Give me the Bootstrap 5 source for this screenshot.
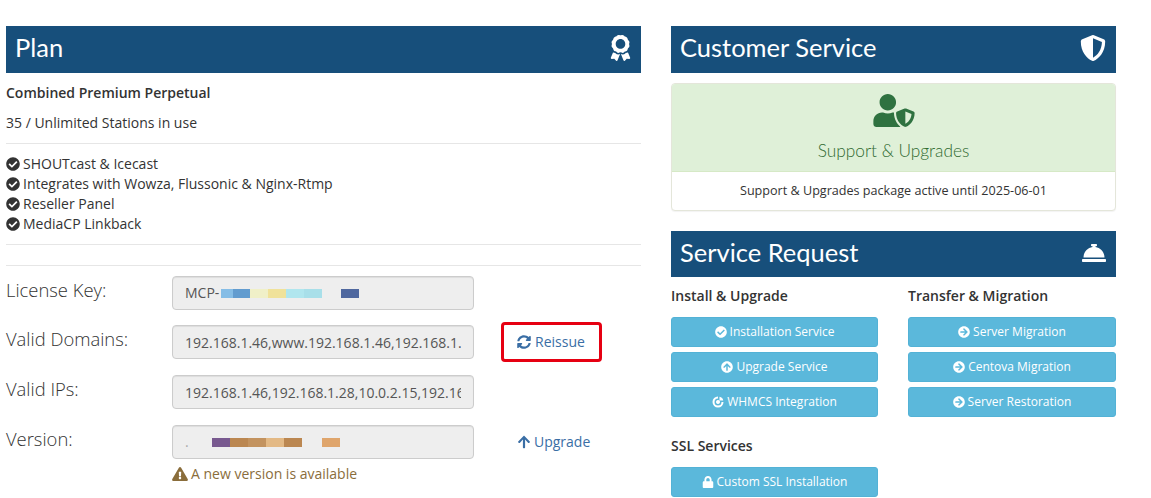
<!DOCTYPE html>
<html lang="en"><head><meta charset="utf-8"><title>License</title>
<link href="https://cdn.jsdelivr.net/npm/bootstrap@5.3.0/dist/css/bootstrap.min.css" rel="stylesheet">
<style>
html,body{height:498px;overflow:hidden}
body{font-family:"Open Sans","Liberation Sans",sans-serif;font-size:14px;line-height:20px;color:#333;background:#fff}
.page-wrap{padding:26px 0 0 6px;gap:30px}
.col-plan{width:635px;flex:none}
.col-side{width:445px;flex:none}
.sec-bar{background:#174f7b;color:#fff;height:47px;padding:0 10px 0 9px;font-family:Lato,"Open Sans",sans-serif;font-size:25.5px;font-weight:400}
.sec-bar.short{height:46px}
.sec-bar span{margin-top:-5px}
.sec-bar svg{fill:#fff;margin-top:-3px}
.plan-name{font-weight:600;margin-top:10px;height:20px}
.plan-use{margin-top:10px;height:20px}
.sep{margin:10px 0;border:0;border-top:1px solid #e6e6e6;opacity:1}
.feat{height:20px}
.feat svg{width:14px;height:14px;fill:#333;margin-right:3px;vertical-align:-2px}
.frow{height:50px;align-items:flex-start}
.frow.first{height:49px}
.flabel{width:166px;flex:none;font-family:"Open Sans",sans-serif;font-weight:300;font-size:18.4px;line-height:28px;color:#333}
.fbox{width:302px;flex:none;height:34px;background:#eee;border:1px solid #ccc;border-radius:4px;padding:6px 12px;color:#555;font-size:14px;line-height:20px;box-shadow:inset 0 1px 1px rgba(0,0,0,.075)}
.fbox.form-control:disabled,.fbox.form-control[readonly]{background:#eee}
.swatch{height:9px;width:18px;flex:none}
.s-lb{background:#85bde6;width:12px;margin-left:2px}.s-b{background:#629ccf;width:17px}.s-py{background:#f0f0c8}.s-y{background:#f0e29a}.s-c{background:#b0e6ee}.s-cc{background:#a8dfe9}.s-n{background:#4f689f}
.s-none{background:transparent;width:19px}
.s-p{background:#78598f;margin-left:23px}.s-br{background:#bb8751}.s-br2{background:#c3935f}.s-t{background:#e3b985}.s-o{background:#dfa56c;margin-left:1px}
.faint-dot{color:#aaa}
.act{margin-left:26px;height:40px;margin-top:-3px;padding:0 14px;color:#3a6ea5;text-decoration:none;display:flex;align-items:center;gap:3px;border:3px solid transparent;border-radius:4px}
.act svg{width:14px;height:14px;fill:#3a6ea5}
.act.mark-red{border-color:#e60012;width:101px;padding:0 13px;margin-left:27px;gap:4px}
.warn-note{color:#8a6d3b;margin-top:-11px;padding-left:166px}
.warn-note svg{width:16px;height:14px;fill:#8a6d3b;vertical-align:-2px;margin-right:3px}
.svc-card{margin-top:10px;height:128px;border:1px solid #e4e6da;border-radius:4px;overflow:hidden;box-shadow:0 1px 1px rgba(0,0,0,.05)}
.svc-top{background:#dff0d8;height:88px;color:#2f6a30;padding-top:10px;border-bottom:1px solid #d6e9c6}
.svc-top svg{width:42px;height:33px;fill:#2f7240;display:block;margin:0 auto}
.svc-title{font-family:Lato,"Open Sans",sans-serif;font-size:17.3px;font-weight:300;margin-top:14px;line-height:20px}
.svc-foot{font-size:12.6px;line-height:37px;color:#333}
.req-h{font-weight:600;font-size:14px;margin:0;height:20px;color:#333}
.req-h.top{margin-top:3px}
.req-h.later{margin-top:21px}
.req-btn{display:flex;align-items:center;justify-content:center;gap:3px;height:30px;padding:0;margin-top:5px;background:#5bb8db;border:1px solid #53b2d6;border-radius:3px;color:#fff;font-size:12px}
.req-h + .req-btn{margin-top:9px}
.req-btn:hover{background:#5bb8db;color:#fff}
.req-btn svg{width:12px;height:12px;fill:#fff}
.req-col{width:207px;flex:none}
.req-col + .req-col{margin-left:30px;width:208px}
.req-cols{margin-top:8px}
</style></head>
<body>
<div class="d-flex page-wrap">
  <div class="col-plan">
    <div class="sec-bar d-flex align-items-center justify-content-between"><span>Plan</span>
      <svg width="21" height="26" viewBox="0 0 384 512"><path d="M97.12 362.63c-8.69-8.69-4.16-6.24-25.12-11.85-9.51-2.55-17.87-7.45-25.43-13.32L1.2 448.7c-4.39 10.77 3.81 22.47 15.43 22.03l52.69-2.01L105.56 507c8 8.44 22.04 5.81 26.43-4.96l52.05-127.62c-10.84 6.04-22.87 9.58-35.31 9.58-19.5 0-37.82-7.59-51.61-21.37zM382.8 448.7l-45.37-111.24c-7.56 5.88-15.92 10.77-25.43 13.32-21.07 5.64-16.45 3.18-25.12 11.85-13.79 13.78-32.12 21.37-51.62 21.37-12.44 0-24.47-3.55-35.31-9.58L252 502.04c4.39 10.77 18.44 13.4 26.43 4.96l36.25-38.28 52.69 2.01c11.62.44 19.82-11.27 15.43-22.03zM263 340c15.28-15.55 17.03-14.21 38.79-20.14 13.89-3.79 24.75-14.84 28.47-28.98 7.48-28.4 5.54-24.97 25.95-45.75 10.17-10.35 14.14-25.44 10.42-39.58-7.47-28.38-7.48-24.42 0-52.83 3.72-14.14-.25-29.23-10.42-39.58-20.41-20.78-18.47-17.36-25.95-45.75-3.72-14.14-14.58-25.19-28.47-28.98-27.88-7.61-24.52-5.62-44.95-26.41-10.17-10.35-25-14.4-38.89-10.61-27.87 7.6-23.98 7.61-51.9 0-13.89-3.79-28.72.25-38.89 10.61-20.41 20.78-17.05 18.8-44.94 26.41-13.89 3.79-24.75 14.84-28.47 28.98-7.47 28.39-5.54 24.97-25.95 45.75-10.17 10.35-14.15 25.44-10.42 39.58 7.47 28.36 7.48 24.4 0 52.82-3.72 14.14.25 29.23 10.42 39.59 20.41 20.78 18.47 17.35 25.95 45.75 3.72 14.14 14.58 25.19 28.47 28.98C104.6 325.96 106.27 325 121 340c13.23 13.47 33.84 15.88 49.74 5.82a39.676 39.676 0 0 1 42.53 0c15.89 10.06 36.5 7.65 49.73-5.82zM97.66 175.96c0-53.03 42.24-96.02 94.34-96.02s94.34 42.99 94.34 96.02-42.24 96.02-94.34 96.02-94.34-42.99-94.34-96.02z"/></svg></div>
    <div class="plan-name">Combined Premium Perpetual</div>
    <div class="plan-use">35 / Unlimited Stations in use</div>
    <hr class="sep">
    <div class="feat"><svg viewBox="0 0 512 512"><path d="M504 256c0 136.967-111.033 248-248 248S8 392.967 8 256 119.033 8 256 8s248 111.033 248 248zM227.314 387.314l184-184c6.248-6.248 6.248-16.379 0-22.627l-22.627-22.627c-6.248-6.249-16.379-6.249-22.628 0L216 308.118l-70.059-70.059c-6.248-6.248-16.379-6.248-22.628 0l-22.627 22.627c-6.248 6.248-6.248 16.379 0 22.627l104 104c6.249 6.249 16.379 6.249 22.628.001z"/></svg>SHOUTcast &amp; Icecast</div>
    <div class="feat"><svg viewBox="0 0 512 512"><path d="M504 256c0 136.967-111.033 248-248 248S8 392.967 8 256 119.033 8 256 8s248 111.033 248 248zM227.314 387.314l184-184c6.248-6.248 6.248-16.379 0-22.627l-22.627-22.627c-6.248-6.249-16.379-6.249-22.628 0L216 308.118l-70.059-70.059c-6.248-6.248-16.379-6.248-22.628 0l-22.627 22.627c-6.248 6.248-6.248 16.379 0 22.627l104 104c6.249 6.249 16.379 6.249 22.628.001z"/></svg>Integrates with Wowza, Flussonic &amp; Nginx-Rtmp</div>
    <div class="feat"><svg viewBox="0 0 512 512"><path d="M504 256c0 136.967-111.033 248-248 248S8 392.967 8 256 119.033 8 256 8s248 111.033 248 248zM227.314 387.314l184-184c6.248-6.248 6.248-16.379 0-22.627l-22.627-22.627c-6.248-6.249-16.379-6.249-22.628 0L216 308.118l-70.059-70.059c-6.248-6.248-16.379-6.248-22.628 0l-22.627 22.627c-6.248 6.248-6.248 16.379 0 22.627l104 104c6.249 6.249 16.379 6.249 22.628.001z"/></svg>Reseller Panel</div>
    <div class="feat"><svg viewBox="0 0 512 512"><path d="M504 256c0 136.967-111.033 248-248 248S8 392.967 8 256 119.033 8 256 8s248 111.033 248 248zM227.314 387.314l184-184c6.248-6.248 6.248-16.379 0-22.627l-22.627-22.627c-6.248-6.249-16.379-6.249-22.628 0L216 308.118l-70.059-70.059c-6.248-6.248-16.379-6.248-22.628 0l-22.627 22.627c-6.248 6.248-6.248 16.379 0 22.627l104 104c6.249 6.249 16.379 6.249 22.628.001z"/></svg>MediaCP Linkback</div>
    <hr class="sep">
    <hr class="sep" style="margin-top:20px">
    <div class="frow first d-flex"><div class="flabel">License Key:</div>
      <div class="fbox d-flex align-items-center"><span>MCP-</span><span class="swatch s-lb"></span><span class="swatch s-b"></span><span class="swatch s-py"></span><span class="swatch s-y"></span><span class="swatch s-c"></span><span class="swatch s-cc"></span><span class="swatch s-none"></span><span class="swatch s-n"></span></div></div>
    <div class="frow d-flex"><div class="flabel">Valid Domains:</div>
      <input class="form-control fbox" readonly value="192.168.1.46,www.192.168.1.46,192.168.1.28,www.192.168.1.28">
      <a href="#" class="act mark-red"><svg viewBox="0 0 512 512"><path d="M370.72 133.28C339.458 104.008 298.888 87.962 255.848 88c-77.458.068-144.328 53.178-162.791 126.85-1.344 5.363-6.122 9.15-11.651 9.15H24.103c-7.498 0-13.194-6.807-11.807-14.176C33.933 94.924 134.813 8 256 8c66.448 0 126.791 26.136 171.315 68.685L463.03 40.97C478.149 25.851 504 36.559 504 57.941V192c0 13.255-10.745 24-24 24H345.941c-21.382 0-32.09-25.851-16.971-40.971l41.75-41.749zM32 296h134.059c21.382 0 32.09 25.851 16.971 40.971l-41.75 41.75c31.262 29.273 71.835 45.319 114.876 45.28 77.418-.07 144.315-53.144 162.787-126.849 1.344-5.363 6.122-9.15 11.651-9.15h57.304c7.498 0 13.194 6.807 11.807 14.176C478.067 417.076 377.187 504 256 504c-66.448 0-126.791-26.136-171.315-68.685L48.97 471.03C33.851 486.149 8 475.441 8 454.059V320c0-13.255 10.745-24 24-24z"/></svg>Reissue</a></div>
    <div class="frow d-flex"><div class="flabel">Valid IPs:</div>
      <input class="form-control fbox" readonly value="192.168.1.46,192.168.1.28,10.0.2.15,192.168.56.1"></div>
    <div class="frow d-flex"><div class="flabel">Version:</div>
      <div class="fbox d-flex align-items-center"><span class="faint-dot">.</span><span class="swatch s-p"></span><span class="swatch s-br"></span><span class="swatch s-br2"></span><span class="swatch s-t"></span><span class="swatch s-br"></span><span class="swatch s-none"></span><span class="swatch s-o"></span></div>
      <a href="#" class="act"><svg viewBox="0 0 448 512"><path d="M34.9 289.5l-22.2-22.2c-9.4-9.4-9.4-24.6 0-33.9L207 39c9.4-9.4 24.6-9.4 33.9 0l194.3 194.3c9.4 9.4 9.4 24.6 0 33.9L413 289.4c-9.5 9.5-25 9.3-34.3-.4L264 168.6V456c0 13.3-10.7 24-24 24h-32c-13.3 0-24-10.7-24-24V168.6L69.2 289.1c-9.3 9.8-24.8 10-34.3.4z"/></svg>Upgrade</a></div>
    <div class="warn-note"><svg viewBox="0 0 576 512"><path d="M569.517 440.013C587.975 472.007 564.806 512 527.94 512H48.054c-36.937 0-59.999-40.055-41.577-71.987L246.423 23.985c18.467-32.009 64.72-31.951 83.154 0l239.94 416.028zM288 354c-25.405 0-46 20.595-46 46s20.595 46 46 46 46-20.595 46-46-20.595-46-46-46zm-43.673-165.346l7.418 136c.347 6.364 5.609 11.346 11.982 11.346h48.546c6.373 0 11.635-4.982 11.982-11.346l7.418-136c.375-6.874-5.098-12.654-11.982-12.654h-63.383c-6.884 0-12.356 5.78-11.981 12.654z"/></svg>A new version is available</div>
  </div>
  <div class="col-side">
    <div class="sec-bar d-flex align-items-center justify-content-between"><span>Customer Service</span>
      <svg width="26" height="26" viewBox="0 0 512 512"><path d="M466.5 83.7l-192-80a48.15 48.15 0 0 0-36.9 0l-192 80C27.7 91.1 16 108.6 16 128c0 198.5 114.5 335.7 221.5 380.3 11.8 4.9 25.1 4.9 36.9 0C360.1 472.6 496 349.3 496 128c0-19.4-11.7-36.9-29.5-44.3zM256.1 446.3l-.1-381 175.9 73.3c-3.3 151.4-82.1 261.1-175.8 307.7z"/></svg></div>
    <div class="card svc-card">
      <div class="svc-top text-center"><svg viewBox="0 0 640 512"><path d="M622.3 271.1l-115.2-45c-4.1-1.6-12.6-3.7-22.2 0l-115.2 45c-10.7 4.2-17.7 14-17.7 24.9 0 111.6 68.7 188.8 132.9 213.9 9.6 3.7 18 1.6 22.2 0C558.4 489.9 640 420.5 640 296c0-10.9-7-20.7-17.7-24.9zM496 462.4V273.3l95.5 37.3c-5.6 87.1-60.9 135.4-95.5 151.8zM224 256c70.7 0 128-57.3 128-128S294.7 0 224 0 96 57.3 96 128s57.3 128 128 128zm96 40c0-2.5.8-4.8 1.1-7.2-2.5-.1-4.9-.8-7.5-.8h-16.7c-22.2 10.2-46.9 16-72.9 16s-50.6-5.8-72.9-16h-16.7C60.2 288 0 348.2 0 422.4V464c0 26.5 21.5 48 48 48h352c6.8 0 13.3-1.5 19.2-4-54-42.9-99.2-116.7-99.2-212z"/></svg>
        <div class="svc-title">Support &amp; Upgrades</div></div>
      <div class="svc-foot text-center">Support &amp; Upgrades package active until 2025-06-01</div>
    </div>
    <div class="sec-bar short d-flex align-items-center justify-content-between" style="margin-top:20px"><span>Service Request</span>
      <svg width="24" height="24" viewBox="0 0 512 512"><path d="M288 130.54V112h16c8.84 0 16-7.16 16-16V80c0-8.84-7.16-16-16-16h-96c-8.84 0-16 7.16-16 16v16c0 8.84 7.16 16 16 16h16v18.54C115.49 146.11 32 239.18 32 352h448c0-112.82-83.49-205.89-192-221.46zM496 384H16c-8.84 0-16 7.16-16 16v32c0 8.84 7.16 16 16 16h480c8.84 0 16-7.16 16-16v-32c0-8.84-7.16-16-16-16z"/></svg></div>
    <div class="d-flex req-cols">
      <div class="req-col"><h6 class="req-h top">Install &amp; Upgrade</h6>
        <a href="#" class="btn req-btn"><svg viewBox="0 0 512 512"><path d="M504 256c0 136.967-111.033 248-248 248S8 392.967 8 256 119.033 8 256 8s248 111.033 248 248zM227.314 387.314l184-184c6.248-6.248 6.248-16.379 0-22.627l-22.627-22.627c-6.248-6.249-16.379-6.249-22.628 0L216 308.118l-70.059-70.059c-6.248-6.248-16.379-6.248-22.628 0l-22.627 22.627c-6.248 6.248-6.248 16.379 0 22.627l104 104c6.249 6.249 16.379 6.249 22.628.001z"/></svg>Installation Service</a>
        <a href="#" class="btn req-btn"><svg viewBox="0 0 512 512"><path d="M8 256C8 119 119 8 256 8s248 111 248 248-111 248-248 248S8 393 8 256zm143.6 28.9l72.4-75.5V392c0 13.3 10.7 24 24 24h16c13.3 0 24-10.7 24-24V209.4l72.4 75.5c9.3 9.7 24.8 9.9 34.3.4l10.9-11c9.4-9.4 9.4-24.6 0-33.9L273 107.7c-9.4-9.4-24.6-9.4-33.9 0L106.3 240.4c-9.4 9.4-9.4 24.6 0 33.9l10.9 11c9.6 9.5 25.1 9.3 34.4-.4z"/></svg>Upgrade Service</a>
        <a href="#" class="btn req-btn"><svg viewBox="0 0 24 24"><path fill-rule="evenodd" d="M12 1a11 11 0 1 0 11 11h-4a7 7 0 1 1-7-7zM15 1.500a9 9 0 0 1 7.500 7.500H15zM12 8a4 4 0 1 0 .01 0z"/></svg>WHMCS Integration</a>
        <h6 class="req-h later">SSL Services</h6>
        <a href="#" class="btn req-btn"><svg viewBox="0 0 448 512"><path d="M400 224h-24v-72C376 68.2 307.8 0 224 0S72 68.2 72 152v72H48c-26.5 0-48 21.5-48 48v192c0 26.5 21.5 48 48 48h352c26.500 0 48-21.5 48-48V272c0-26.5-21.5-48-48-48zm-104 0H152v-72c0-39.7 32.3-72 72-72s72 32.3 72 72v72z"/></svg>Custom SSL Installation</a>
      </div>
      <div class="req-col"><h6 class="req-h top">Transfer &amp; Migration</h6>
        <a href="#" class="btn req-btn"><svg viewBox="0 0 512 512"><path d="M256 8c137 0 248 111 248 248S393 504 256 504 8 393 8 256 119 8 256 8zm-28.9 143.6l75.5 72.4H120c-13.3 0-24 10.7-24 24v16c0 13.3 10.7 24 24 24h182.6l-75.5 72.4c-9.7 9.3-9.9 24.8-.4 34.3l11 10.9c9.4 9.4 24.6 9.4 33.9 0L404.3 273c9.4-9.4 9.4-24.6 0-33.9L271.6 106.3c-9.4-9.4-24.6-9.4-33.9 0l-11 10.9c-9.5 9.6-9.3 25.1.4 34.4z"/></svg>Server Migration</a>
        <a href="#" class="btn req-btn"><svg viewBox="0 0 512 512"><path d="M256 8c137 0 248 111 248 248S393 504 256 504 8 393 8 256 119 8 256 8zm-28.9 143.6l75.5 72.4H120c-13.3 0-24 10.7-24 24v16c0 13.3 10.7 24 24 24h182.6l-75.5 72.4c-9.7 9.3-9.9 24.8-.4 34.3l11 10.9c9.4 9.4 24.6 9.4 33.9 0L404.3 273c9.4-9.4 9.4-24.6 0-33.9L271.6 106.3c-9.4-9.4-24.6-9.4-33.9 0l-11 10.9c-9.5 9.6-9.3 25.1.4 34.4z"/></svg>Centova Migration</a>
        <a href="#" class="btn req-btn"><svg viewBox="0 0 512 512"><path d="M256 8c137 0 248 111 248 248S393 504 256 504 8 393 8 256 119 8 256 8zm-28.9 143.6l75.5 72.4H120c-13.3 0-24 10.7-24 24v16c0 13.3 10.7 24 24 24h182.6l-75.5 72.4c-9.7 9.3-9.9 24.8-.4 34.3l11 10.9c9.4 9.4 24.6 9.4 33.9 0L404.3 273c9.4-9.4 9.4-24.6 0-33.9L271.6 106.3c-9.4-9.4-24.6-9.4-33.9 0l-11 10.9c-9.5 9.6-9.3 25.1.4 34.4z"/></svg>Server Restoration</a>
      </div>
    </div>
  </div>
</div>
<script src="https://cdn.jsdelivr.net/npm/bootstrap@5.3.0/dist/js/bootstrap.bundle.min.js"></script>
</body></html>
